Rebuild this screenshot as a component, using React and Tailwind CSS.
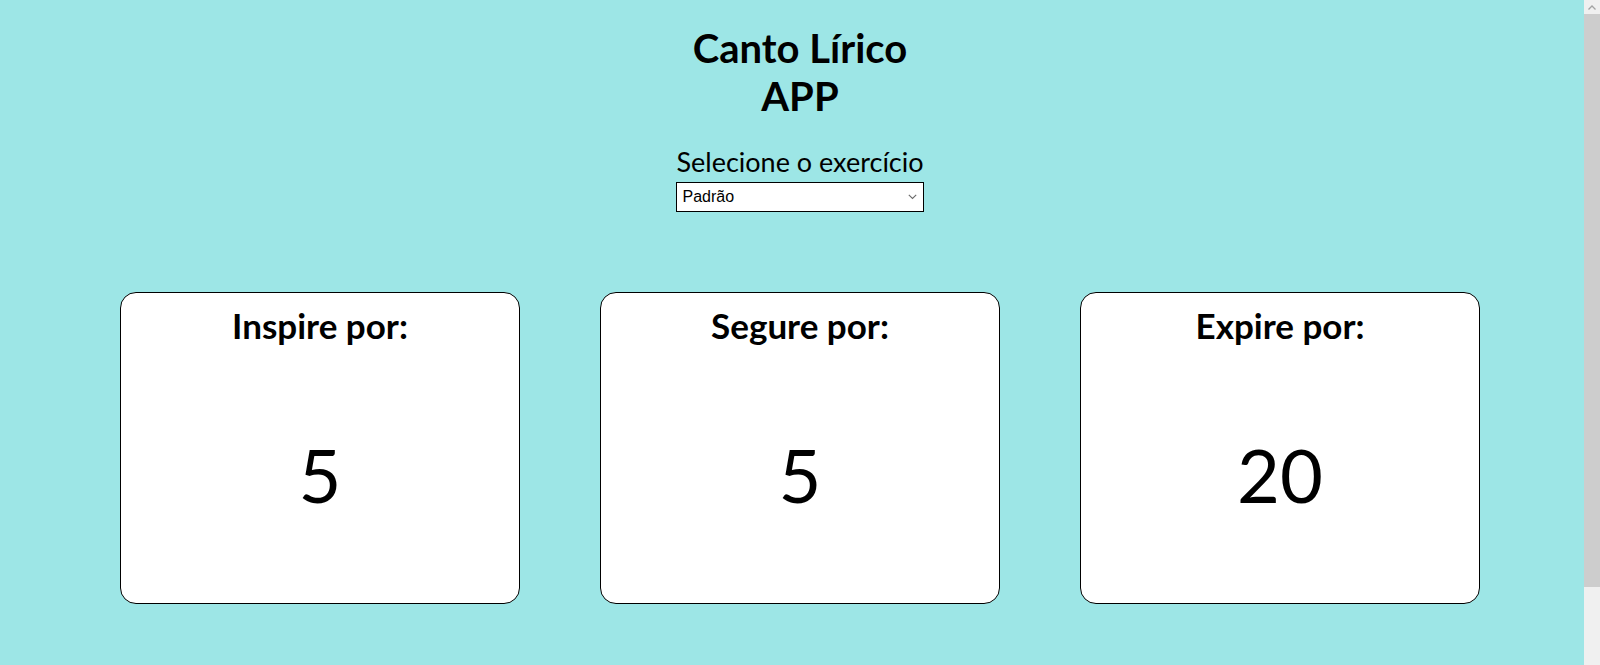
import React, { useState } from 'react';

const exercicios = {
  'Padrão': { inspire: 5, segure: 5, expire: 20 },
};

const Card = ({ title, value }) => (
  <div className="w-[400px] h-[312px] bg-white border border-black rounded-[16px] flex flex-col items-center">
    <h2 className="pt-[11px] text-[35px] leading-[42px] font-bold">{title}</h2>
    <div className="flex-1 flex items-center justify-center">
      <span className="text-[74px] leading-[89px]">{value}</span>
    </div>
  </div>
);

const App = () => {
  const [exercicio, setExercicio] = useState('Padrão');
  const tempos = exercicios[exercicio];

  return (
    <div
      className="relative w-full h-[665px] overflow-hidden bg-[#9de6e6] text-black"
      style={{ fontFamily: 'Lato, "Noto Sans", sans-serif' }}
    >
      <div className="flex flex-col items-center pt-[24px]">
        <h1 className="text-[40px] leading-[48px] font-bold text-center">
          Canto Lírico
          <br />
          APP
        </h1>

        <div className="mt-[25px] flex flex-col">
          <label htmlFor="exercicio" className="text-[27px] leading-[34px] text-center">
            Selecione o exercício
          </label>
          <div className="relative mt-[3px]">
            <select
              id="exercicio"
              value={exercicio}
              onChange={(e) => setExercicio(e.target.value)}
              className="h-[30px] w-full bg-white border border-black pl-[5px] pr-[20px] text-[16px] appearance-none"
              style={{ fontFamily: '"Liberation Sans", Arial, sans-serif' }}
            >
              <option>Padrão</option>
            </select>
            <svg
              className="absolute right-[7px] top-[12px] pointer-events-none text-[#6b6b6b]"
              width="9" height="6" viewBox="0 0 9 6"
            >
              <path d="M0.8 0.8 L4.5 4.5 L8.2 0.8" fill="none" stroke="currentColor" strokeWidth="1.1" />
            </svg>
          </div>
        </div>
      </div>

      {/* cards */}
      <div className="mt-[80px] flex justify-center gap-[80px]">
        <Card title="Inspire por:" value={tempos.inspire} />
        <Card title="Segure por:" value={tempos.segure} />
        <Card title="Expire por:" value={tempos.expire} />
      </div>

      {/* barra de rolagem */}
      <div className="absolute top-0 right-0 w-[16px] h-full bg-[#f0f0f0] flex flex-col">
        <div className="h-[14px] flex items-center justify-center text-[#a3a3a3]">
          <svg width="8" height="5" viewBox="0 0 8 5">
            <path d="M0.5 4.5 L4 1 L7.5 4.5" fill="none" stroke="currentColor" strokeWidth="1.3" />
          </svg>
        </div>
        <div className="h-[573px] bg-[#cdcdcd] mx-0" />
      </div>
    </div>
  );
};

export default App;
